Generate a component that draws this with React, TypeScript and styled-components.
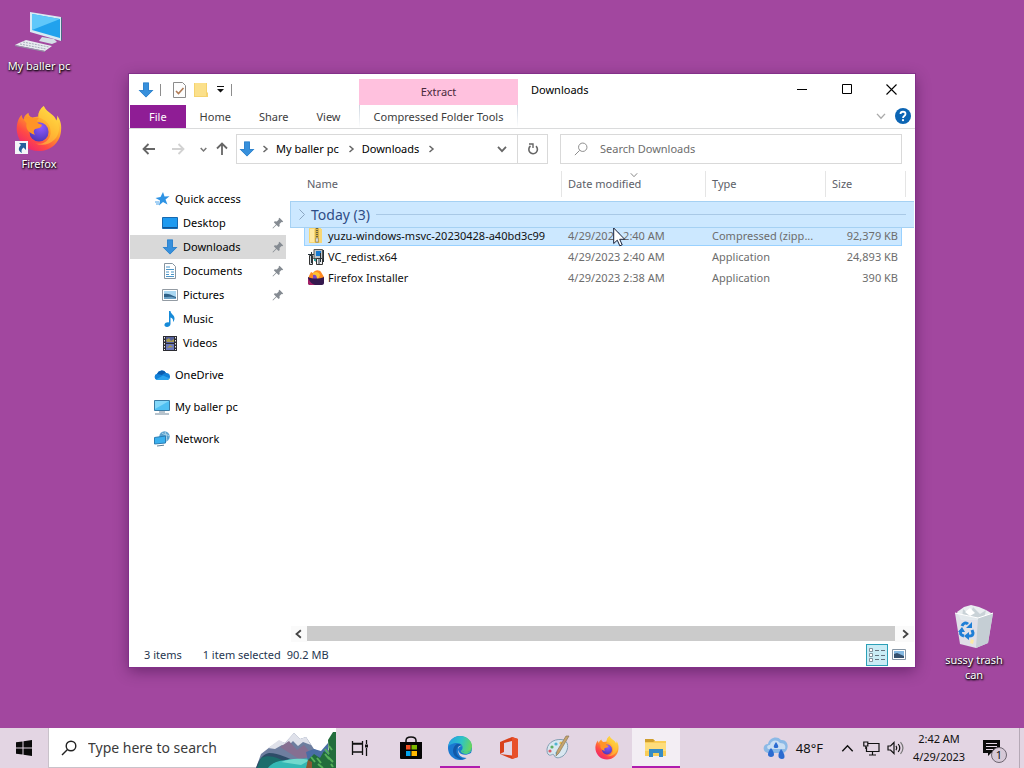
import React from "react";
import styled, { createGlobalStyle } from "styled-components";

const Global = createGlobalStyle`
  *, *::before, *::after { box-sizing: border-box; }
  body { margin: 0; }
  body, button, input, table {
    font-family: "Noto Sans", "Open Sans", sans-serif;
    font-size: 11px;
    line-height: 16px;
  }
  button { border: 0; padding: 0; background: none; color: inherit; cursor: default; }
  a { color: inherit; text-decoration: none; cursor: default; }
  svg { display: block; flex: none; }
`;

/* ---------- desktop ---------- */

const Screen = styled.div`
  display: flex;
  flex-direction: column;
  min-height: 100vh;
  background: #a2479f;
  overflow: hidden;
`;

const Desktop = styled.main`
  position: relative;
  flex: 1;
  display: flex;
  padding: 74px 109px 61px 129px;
`;

const Shortcut = styled.a<{ $x?: number; $right?: number; $top?: number; $bottom?: number }>`
  position: absolute;
  left: ${(p) => (p.$x !== undefined ? `${p.$x}px` : "auto")};
  right: ${(p) => (p.$right !== undefined ? `${p.$right}px` : "auto")};
  top: ${(p) => (p.$top !== undefined ? `${p.$top}px` : "auto")};
  bottom: ${(p) => (p.$bottom !== undefined ? `${p.$bottom}px` : "auto")};
  width: 78px;
  display: flex;
  flex-direction: column;
  align-items: center;
  gap: 2px;
  padding: 0 8px;
  color: #fff;
  line-height: 15px;
  text-align: center;
  text-shadow: 1px 1px 2px #000, 0 1px 2px #000;
`;

const ShortcutName = styled.span<{ $wrap?: boolean }>`
  white-space: ${(p) => (p.$wrap ? "normal" : "nowrap")};
`;

const Window = styled.section`
  flex: 1;
  min-width: 0;
  display: flex;
  flex-direction: column;
  background: #fff;
  color: #000;
  box-shadow: 0 0 0 1px #83308a, 0 4px 14px rgba(40, 0, 50, 0.45);
`;

/* ---------- title bar and ribbon ---------- */

const Ribbon = styled.header`
  display: flex;
  height: 55px;
  border-bottom: 1px solid #dadbdc;
`;

const RibbonLeft = styled.div`
  width: 230px;
  display: flex;
  flex-direction: column;
`;

const QuickBar = styled.div`
  height: 31px;
  display: flex;
  align-items: center;
  padding-left: 9px;
`;

const QuickButton = styled.button<{ $narrow?: boolean }>`
  width: ${(p) => (p.$narrow ? 10 : 16)}px;
  height: 22px;
  margin-right: 6px;
  display: grid;
  place-items: center;
`;

const Divider = styled.span`
  width: 1px;
  height: 12px;
  margin-right: 10px;
  background: #8d8d8d;
`;

const TabList = styled.nav`
  flex: 1;
  display: flex;
  padding-left: 1px;
`;

const Tab = styled.button<{ $file?: boolean }>`
  height: 23px;
  padding: ${(p) => (p.$file ? "0 19px" : "0 14px")};
  color: ${(p) => (p.$file ? "#fff" : "#3c3c3c")};
  background: ${(p) => (p.$file ? "#8f1d95" : "transparent")};
  white-space: nowrap;
`;

const ContextTabs = styled.div`
  width: 159px;
  padding-top: 5px;
  display: flex;
  flex-direction: column;
`;

const ContextTitle = styled.div`
  height: 26px;
  display: grid;
  place-items: center;
  background: #ffc1de;
  color: #4a2a3c;
`;

const ContextTab = styled(Tab)`
  padding: 0;
  border: solid transparent;
  border-width: 0 1px;
  background:
    linear-gradient(#ccd5df, #fff) left / 1px 100% no-repeat,
    linear-gradient(#ccd5df, #fff) right / 1px 100% no-repeat;
  background-origin: border-box;
`;

const WindowTitle = styled.h1`
  flex: 1;
  margin: 0;
  padding: 8px 0 0 13px;
  font-size: 11px;
  font-weight: 400;
`;

const WindowControls = styled.div`
  display: grid;
  grid-template-columns: repeat(3, 45px);
  grid-template-rows: 30px 24px;
  padding-right: 1px;
`;

const ControlButton = styled.button`
  display: grid;
  place-items: center;
`;

const HelpRow = styled.div`
  grid-column: 1 / -1;
  display: flex;
  justify-content: flex-end;
  align-items: center;
  gap: 9px;
  padding-right: 3px;
`;

/* ---------- address bar ---------- */

const AddressRow = styled.div`
  display: grid;
  grid-template-columns: 96px minmax(0, 312fr) minmax(0, 354fr);
  align-items: center;
  padding: 5px 13px 7px 11px;
`;

const NavButtons = styled.div`
  display: flex;
  align-items: center;
`;

const NavButton = styled.button<{ $w: number }>`
  width: ${(p) => p.$w}px;
  height: 24px;
  display: grid;
  place-items: center;
`;

const AddressBox = styled.div`
  height: 30px;
  display: flex;
  align-items: center;
  border: 1px solid #d9d9d9;
  padding-left: 2px;
  white-space: nowrap;
`;

const Crumb = styled.a`
  padding: 0 8px;
`;

const CrumbArrow = styled.span`
  width: 7px;
  display: grid;
  place-items: center;
  svg + & { margin-left: 6px; }
`;

const AddressEnd = styled.div`
  margin-left: auto;
  height: 100%;
  display: grid;
  align-items: center;
  grid-template-columns: 30px 30px;
`;

const Refresh = styled.button`
  height: 100%;
  display: grid;
  place-items: center;
  border-left: 1px solid #d9d9d9;
`;

const FileSearch = styled.label`
  height: 30px;
  margin-left: 12px;
  display: flex;
  align-items: center;
  gap: 12px;
  padding-left: 13px;
  border: 1px solid #d9d9d9;
`;

const SearchInput = styled.input<{ $large?: boolean }>`
  flex: 1;
  min-width: 0;
  border: 0;
  padding: 0;
  outline: 0;
  background: none;
  font-size: ${(p) => (p.$large ? 14 : 11)}px;
  line-height: 20px;
  &::placeholder { color: ${(p) => (p.$large ? "#3b3b3b" : "#6d6d6d")}; opacity: 1; }
`;

/* ---------- body ---------- */

const Body = styled.div`
  flex: 1;
  display: flex;
`;

const Sidebar = styled.nav`
  width: 161px;
  padding: 16px 4px 0 1px;
`;

const SideItem = styled.a<{ $child?: boolean; $active?: boolean; $spaced?: boolean }>`
  height: 24px;
  margin-top: ${(p) => (p.$spaced ? 8 : 0)}px;
  padding-left: ${(p) => (p.$child ? 32 : 24)}px;
  padding-right: 2px;
  display: flex;
  align-items: center;
  gap: 5px;
  background: ${(p) => (p.$active ? "#d9d9d9" : "transparent")};
`;

const SideLabel = styled.span`
  flex: 1;
  white-space: nowrap;
`;

const Content = styled.div`
  flex: 1;
  min-width: 0;
  display: flex;
  flex-direction: column;
  padding-right: 1px;
`;

const FileTable = styled.table`
  display: block;
  flex: 1;
  thead, tbody { display: block; }
`;

const HeadRow = styled.tr`
  display: grid;
  grid-template-columns: 1fr 144px 120px 80px;
  height: 26px;
  margin: 0 8px 4px 14px;
`;

const HeadCell = styled.th`
  position: relative;
  display: flex;
  align-items: center;
  padding: 0 0 0 6px;
  border-right: 1px solid #e5e5e5;
  font-weight: 400;
  color: #5c6068;
  &:first-child { padding-left: 3px; }
`;

const SortMark = styled.span`
  position: absolute;
  top: 0;
  left: 50%;
  margin-left: -4px;
`;

const GroupRow = styled.tr`
  position: relative;
  z-index: 1;
  display: block;
  margin-bottom: -3px;
`;

const GroupCell = styled.th`
  display: flex;
  align-items: center;
  gap: 6px;
  height: 27px;
  padding: 0 8px;
  border: 1px solid #a5d1f3;
  border-right: 0;
  background: #cce8ff;
  color: #2f4d86;
  font-size: 14px;
  line-height: 20px;
  font-weight: 400;
  &::after {
    content: "";
    flex: 1;
    height: 1px;
    background: #a9c9e6;
  }
`;

const FileRow = styled.tr<{ $selected?: boolean }>`
  display: grid;
  grid-template-columns: 1fr 144px 120px 76px;
  height: 21px;
  margin: 0 12px 0 14px;
  background: ${(p) => (p.$selected ? "#cce8ff" : "transparent")};
  box-shadow: ${(p) => (p.$selected ? "inset 0 0 0 1px #99d1ff" : "none")};
`;

const Cell = styled.td<{ $name?: boolean; $right?: boolean }>`
  display: flex;
  align-items: center;
  justify-content: ${(p) => (p.$right ? "flex-end" : "flex-start")};
  gap: 4px;
  padding: ${(p) => (p.$name ? "0 0 0 4px" : p.$right ? "0 4px 0 0" : "0 0 0 6px")};
  color: ${(p) => (p.$name ? "#111" : "#6d6d6d")};
  white-space: nowrap;
`;

const ScrollBar = styled.div`
  height: 16px;
  display: grid;
  grid-template-columns: 16px 1fr 19px;
  padding-left: 1px;
`;

const ScrollButton = styled.button`
  display: grid;
  place-items: center;
  background: #fafafa;
`;

const Thumb = styled.div`
  background: #cbcbcb;
  height: 15px;
`;

const StatusBar = styled.footer`
  height: 25px;
  display: flex;
  align-items: center;
  padding: 0 5px 0 15px;
  color: #26364f;
  white-space: pre;
`;

const StatusText = styled.span<{ $gap: number }>`
  margin-right: ${(p) => p.$gap}px;
`;

const ViewToggle = styled.button<{ $on?: boolean }>`
  width: 22px;
  height: 22px;
  display: grid;
  place-items: center;
  border: 1px solid ${(p) => (p.$on ? "#2ba0b8" : "transparent")};
  background: ${(p) => (p.$on ? "#c9ecf5" : "transparent")};
  &:first-of-type { margin-left: auto; }
`;

const Pointer = styled.span`
  position: absolute;
  left: 613px;
  top: 227px;
  z-index: 2;
`;

/* ---------- taskbar ---------- */

const TaskBar = styled.footer`
  height: 40px;
  display: flex;
  background: #e3d5e3;
  color: #111;
`;

const TaskButton = styled.button<{ $state?: "running" | "active" }>`
  position: relative;
  width: 48px;
  height: 40px;
  display: grid;
  place-items: center;
  background: ${(p) => (p.$state === "active" ? "#f3eef4" : "transparent")};
  &::after {
    content: "";
    position: absolute;
    bottom: 0;
    left: ${(p) => (p.$state === "active" ? 0 : 4)}px;
    right: ${(p) => (p.$state === "active" ? 0 : 4)}px;
    height: ${(p) => (p.$state ? 2 : 0)}px;
    background: #b01cae;
  }
`;

const TaskSearch = styled.label`
  width: 288px;
  display: flex;
  align-items: center;
  gap: 11px;
  padding-left: 12px;
  background: #fff;
  border-bottom: 1px solid #c9c2ca;
  border-left: 1px solid #c9c2ca;
`;

const Scenery = styled.span`
  align-self: flex-end;
  margin-bottom: -1px;
`;

const Apps = styled.div`
  display: flex;
  gap: 1px;
  margin-left: 3px;
`;

const Tray = styled.div`
  margin-left: auto;
  display: flex;
  align-items: center;
`;

const Weather = styled.button`
  display: flex;
  align-items: center;
  gap: 7px;
  margin-right: 12px;
  font-size: 13px;
  line-height: 18px;
`;

const TrayButton = styled.button`
  width: 24px;
  height: 40px;
  display: grid;
  place-items: center;
`;

const Clock = styled.time`
  width: 64px;
  text-align: center;
  line-height: 18px;
`;

const Notice = styled.button`
  position: relative;
  width: 48px;
  height: 40px;
  padding-right: 8px;
  display: grid;
  place-items: center;
`;

const Badge = styled.span`
  position: absolute;
  left: 20px;
  top: 19px;
  width: 16px;
  height: 16px;
  border: 1px solid #6d6570;
  border-radius: 50%;
  background: #d6c9d7;
  line-height: 14px;
  text-align: center;
`;

const ShowDesktop = styled.button`
  width: 5px;
  height: 40px;
  border-left: 1px solid #b5a9b6;
`;

/* ---------- drawings ---------- */

const DownArrow = ({ s = 16 }: { s?: number }) => (
  <svg width={s} height={s} viewBox="0 0 16 16">
    <path d="M5 .5h6V8h4.500L8 15.500.5 8H5z" fill="#3790dc" />
    <path d="M5.500 1h5v7.500h4L8 15 1.500 8.500h4z" fill="none" stroke="#2b7cc4" strokeWidth=".6" />
  </svg>
);

const Chevron = ({ dir, size = 8, color = "#666", w = 1.5 }: { dir: "r" | "l" | "d" | "u"; size?: number; color?: string; w?: number }) => {
  const d = { r: "M2.500 1 6 4 2.500 7", l: "M5.500 1 2 4l3.500 3", d: "M.8 2.300 4 5.700l3.200-3.400", u: "M.8 5.700 4 2.300l3.200 3.400" }[dir];
  return (
    <svg width={size} height={size} viewBox="0 0 8 8">
      <path d={d} fill="none" stroke={color} strokeWidth={(w * 8) / size} />
    </svg>
  );
};

const Arrow = ({ turn, color }: { turn: number; color: string }) => (
  <svg width="14" height="14" viewBox="0 0 14 14">
    <path d="M13 7H1.500M6.500 2 1.500 7l5 5" fill="none" stroke={color} strokeWidth="1.800" transform={`rotate(${turn} 7 7)`} />
  </svg>
);

const Magnifier = ({ s, color, w }: { s: number; color: string; w: number }) => (
  <svg width={s} height={s} viewBox="0 0 16 16">
    <circle cx="10" cy="6" r="4.800" fill="none" stroke={color} strokeWidth={w} />
    <path d="M6.500 9.500 1 15" stroke={color} strokeWidth={w} />
  </svg>
);

const Firefox = ({ s }: { s: number }) => (
  <svg width={s} height={s} viewBox="0 0 48 48">
    <defs>
      <linearGradient id="fxBody" x1=".8" y1=".1" x2=".2" y2=".95">
        <stop offset="0" stopColor="#ffe14a" />
        <stop offset=".4" stopColor="#ff9a2a" />
        <stop offset=".72" stopColor="#ff4a45" />
        <stop offset="1" stopColor="#ee2470" />
      </linearGradient>
      <radialGradient id="fxCore" cx=".6" cy=".25" r=".8">
        <stop offset="0" stopColor="#9059ff" />
        <stop offset="1" stopColor="#4b36b5" />
      </radialGradient>
    </defs>
    <path d="M29 0c-4 3-6 7-6 11l-6 1c-3-1-4-3-4-5-3 2-5 4-5 7-2-2-2-4-2-5C2 13 0 20 1 27c2 12 11 20 23 20s22-9 23-21c1-8-2-13-4-16 0 2 0 4-1 5C40 8 32 7 29 0z" fill="url(#fxBody)" />
    <path d="M29 0c-4 3-6 7-5 12 7 2 13 8 12 17-1 8-9 12-16 10 12 5 25-3 25-16C45 12 32 9 29 0z" fill="#ffd23c" opacity=".55" />
    <circle cx="24" cy="27" r="10" fill="url(#fxCore)" />
    <path d="M8 14c3-3 7-3 10-1 2-1 4-1 6 0-2 1-3 3-1 5 1 1 4 1 4 2-1 3-4 3-7 4-2 1-2 4 0 6-8-2-10-7-9-12z" fill="#ff9427" />
  </svg>
);

const DesktopPc = () => (
  <svg width="48" height="44" viewBox="-4 0 48 44">
    <path d="M11 0 42 5v24L11 20z" fill="#d8eaf3" />
    <path d="m13 2 28 5v19L13 18z" fill="#21a2ed" />
    <path d="m13 2 28 5-28 11z" fill="#60c8fa" />
    <path d="m42 5 1 1v22l-1 1z" fill="#4c6a83" />
    <path d="m23 25 12 2 3 3-5 2-13-3z" fill="#d5dfe6" />
    <path d="M0 31 7 28l26 6-7 5-30-6z" fill="#e9ebf0" />
    <path d="m-4 33 30 6v1l-30-6z" fill="#929aa6" />
    <path d="m1 32 26 5M4 30l26 5" stroke="#a5adb9" strokeDasharray="2 1" />
  </svg>
);

const FirefoxShortcut = () => (
  <svg width="48" height="48" viewBox="0 0 48 48">
    <svg x="1" width="46" height="46"><Firefox s={46} /></svg>
    <path d="M0 35h13v13H0z" fill="#f4f5f8" />
    <path d="M4 37h7v7l-2.500-2.500C6.500 43 6 45 7 47c-4-2-4-5-1-8z" fill="#255f9c" />
  </svg>
);

const Trash = () => (
  <svg width="42" height="46" viewBox="0 0 42 46">
    <path d="m4 8 7-5 7-2 8 2 7 3 5 3-4 7H8z" fill="#e9edf0" />
    <path d="m10 5 7 6 3-8 7 7 6-4-2 9H9z" fill="#c9d2d7" />
    <path d="m12 8 5-4 5 5-5 3z" fill="#fff" />
    <path d="m2 9 23 5 15-5-5 30-12 5-16-4z" fill="#e3e9ed" opacity=".94" />
    <path d="m25 14 15-5-5 30-12 5z" fill="#c5ced4" />
    <path d="m2 9 23 5 15-5" fill="none" stroke="#fff" />
    <g fill="none" stroke="#1f7ed6" strokeWidth="3">
      <path d="M9 22c1-3 4-4 6-2" />
      <path d="m19 26 1 3c0 3-2 3-4 3" />
      <path d="M11 32c-4-1-4-3-3-5" />
    </g>
    <path d="m13 24 6 0 0-6zM16 28v8l-5-4zM5 28l4-5 3 5z" fill="#1f7ed6" />
    <path d="m18 35 3 1-1 4-3-1z" fill="#fbe9a5" />
  </svg>
);

const CheckDoc = () => (
  <svg width="13" height="16" viewBox="0 0 13 16">
    <path d="M.5.5h9l3 3v12H.5z" fill="#fdfdfd" stroke="#8b8b8b" />
    <path d="m3 9 2.500 2.500L10.500 6" fill="none" stroke="#b07b55" strokeWidth="1.600" />
  </svg>
);

const Folder = () => (
  <svg width="14" height="16" viewBox="0 0 14 16">
    <path d="M0 1h13v9l1 1v4H0z" fill="#f5d36f" />
    <path d="M1 1h11v13H1z" fill="#fbe08b" />
  </svg>
);

const Star = () => (
  <svg width="16" height="16" viewBox="0 0 16 16">
    <path d="m9 1 1.500 4.500 5-.2-4 3.200 2 5-4.500-2.600L5 14.500l1-5L1.500 7l5-1z" fill="#2e93e4" />
    <path d="M1 11h4M2 13h3" stroke="#4ba3ea" />
  </svg>
);

const Monitor = () => (
  <svg width="16" height="16" viewBox="0 0 16 16">
    <path d="M.5 2.500h15v11H.5z" fill="#1e9af0" stroke="#1769b0" />
    <path d="M1 12h14v1H1z" fill="#125393" />
  </svg>
);

const Doc = () => (
  <svg width="16" height="16" viewBox="0 0 16 16">
    <path d="M2.500.5h8l3 3v12h-11z" fill="#fff" stroke="#8795a1" />
    <path d="M4 4h4M4 6.500h8M4 9h3m2 0h3M4 11.500h3m2 0h3M4 13.500h8" stroke="#4b96c9" />
  </svg>
);

const Picture = () => (
  <svg width="16" height="16" viewBox="0 0 16 16">
    <path d="M.5 2.500h15v11H.5z" fill="#fff" stroke="#939ba3" />
    <path d="M2 4h12v8H2z" fill="#a9d7f2" />
    <path d="M2 7c3-1 6 0 12 3v2H2z" fill="#2e6188" />
    <path d="M2 10c4 0 7-1 12 1v1H2z" fill="#6aa0c4" />
  </svg>
);

const Note = () => (
  <svg width="16" height="16" viewBox="0 0 16 16">
    <path d="M7 0h1.500c0 3 4.500 4 4 8-.3 1.500-1 2.500-1.500 3 .5-3-1-4-2.500-4.500V13c0 2-2 3-3.500 3S2 15 2.500 13.500 5 11 7 11.500z" fill="#168ad8" />
  </svg>
);

const Film = () => (
  <svg width="16" height="16" viewBox="0 0 16 16">
    <path d="M1 1h14v15H1z" fill="#2c2c32" />
    <path d="M2.500 2v13M13.500 2v13" stroke="#eee" strokeDasharray="1.500 1.500" />
    <path d="M4 2h8v6H4z" fill="#55609b" />
    <path d="M4 9h8v6H4z" fill="#6c79bc" />
    <path d="m4 5 3-2 2 3 3-2v3H5zM5 13l3-3 3 2" fill="#a69a4f" />
  </svg>
);

const Cloud = () => (
  <svg width="16" height="16" viewBox="0 0 16 16">
    <path d="M3 13a3.200 3.200 0 0 1 0-6.200A5 5 0 0 1 12 6a3.600 3.600 0 0 1 1.500 7z" fill="#1381d8" />
    <path d="M3 7a5 5 0 0 1 9-1c-2 0-3 1-4 2z" fill="#0b5cae" />
    <path d="M2 12.500 9 8.500l6.500 2.800c-.5 1.200-1.200 1.700-2.500 1.700H3z" fill="#2ca4ee" />
  </svg>
);

const SmallPc = () => (
  <svg width="16" height="16" viewBox="0 0 16 16">
    <path d="M.5 1.500h15v10H.5z" fill="#4fc0f3" stroke="#3a7ca5" />
    <path d="M1 2h14L1 10z" fill="#83d8fa" />
    <path d="M5 13h6M1 15h14" stroke="#70889b" />
  </svg>
);

const NetworkIcon = () => (
  <svg width="16" height="16" viewBox="0 0 16 16">
    <circle cx="10.500" cy="5.500" r="5.200" fill="#5ba1ce" />
    <path d="M8 2c2 2 5 1 7 3M11 1c2 3 1 6 2 9" stroke="#b1d7ea" fill="none" />
    <path d="m.5 6.500 11-1.500v7L.5 13z" fill="#3bb0ee" stroke="#2a7db4" />
    <path d="m3 15 7-.8" stroke="#5e7f96" />
  </svg>
);

const Pin = () => (
  <svg width="12" height="12" viewBox="0 0 12 12">
    <path d="m7.500.8 3.700 3.700-1 .8-.7-.2-2 2 .2 2-1 1L4.500 8 1 11.500l-.5-.5L4 7.500 1.800 5.200l1-1 2 .3 2-2-.2-.8z" fill="#858b92" />
  </svg>
);

const Zip = () => (
  <svg width="16" height="16" viewBox="0 0 16 16">
    <path d="M1 0h12v1h1v14H1z" fill="#f8d775" />
    <path d="M2 1h4v13H2z" fill="#ffe9a3" />
    <path d="M7 0h4v15H7z" fill="#d9b44a" />
    <path d="M9 0v9" stroke="#6c6241" strokeWidth="2" strokeDasharray="1 1" />
    <path d="M8 10h2v4H8z" fill="#fff" stroke="#777" strokeWidth=".6" />
  </svg>
);

const Setup = () => (
  <svg width="16" height="16" viewBox="0 0 16 16">
    <path d="M6 .5h8.500v9H6z" fill="#bfc6cc" stroke="#555" />
    <path d="M8 2h5v5H8z" fill="#1479d2" />
    <path d="M1.500 6.500h3v9h-3z" fill="#d5d9df" stroke="#333" />
    <path d="M8.500 9.500h6v6h-6z" fill="#eceef1" stroke="#333" />
    <path d="M0 5.500h6M3.500 3v11M5.500 9l3 4M11 10v5M12.500 4v9M15.500 1v12" stroke="#26323a" />
    <path d="M6 10h2v2H6z" fill="#2ca3a0" />
  </svg>
);

const FoxInstaller = () => (
  <svg width="16" height="16" viewBox="0 0 16 16">
    <path d="M1 6 3 2l2 1c2-4 7-3 8-1l3 5v3H0z" fill="#ff8a22" />
    <path d="M5 3c3-2 6-1 7 2l-2 4H5z" fill="#ffc332" />
    <path d="M5 5c2-1 4 0 4 4H5z" fill="#7746c9" />
    <path d="M0 7c5 2 11 2 16 0v6c0 1-1 2-2 2H2c-1 0-2-1-2-2z" fill="#35194e" />
    <path d="M0 8c2 4 4 6 7 7H2c-1 0-2-1-2-2z" fill="#a51f67" />
  </svg>
);

const MountainScene = () => (
  <svg width="80" height="36" viewBox="0 0 80 36">
    <path d="M0 36 5 22l9-7 9-6 6 2 9-10 6 6 6-2 8 12 8 4 14-6v21z" fill="#6e7e9f" />
    <path d="m12 16 11-8 6 3 9-10 6 6 6-2 5 8-8-3-5 4-5-5-6 6-5-2-7 4z" fill="#dfe1ea" />
    <path d="m24 15 9-6 8 9 7-5 9 11-14 3z" fill="#866f91" />
    <path d="M0 36c3-9 7-14 13-15 11 0 18 6 29 8l-7 7z" fill="#2e4c68" />
    <path d="M5 26c9-4 17 0 24 4l-7 6H1z" fill="#1c6d6c" />
    <path d="M12 36c7-10 24-8 44-10l12 10z" fill="#34b8b4" />
    <path d="M25 30c11-4 18-4 29-2l-9 5z" fill="#70d9cd" />
    <path d="m50 20 8-3 7 2 7-8v18H52z" fill="#496da5" />
    <path d="m51 36 1-8 6-6 6 4 4-7 5 4-1-15 5-8h3v36z" fill="#226d3c" />
    <path d="m55 25 4 5m2-4 4 5m4-14 4 5m-4 0 4 5m-11 5 5 4m6-22 3 4m-4 7 5 5m-2 2 2 3" stroke="#57b25a" strokeWidth="2" />
    <path d="m50 36 2-8 4 2v6z" fill="#8a5932" />
  </svg>
);

const Store = () => (
  <svg width="24" height="24" viewBox="0 0 24 24">
    <path d="M7 7V4.500C7 2.500 9 1 12 1s5 1.500 5 3.500V7" fill="none" stroke="#111" strokeWidth="1.500" />
    <path d="M1 6h22v16a1 1 0 0 1-1 1H2a1 1 0 0 1-1-1z" fill="#050505" />
    <path d="M7 9h4.500v4.500H7z" fill="#f25022" /><path d="M12.500 9H18v4.500h-5.500z" fill="#7fba00" />
    <path d="M7 15h4.500v5H7z" fill="#00a4ef" /><path d="M12.500 15H18v5h-5.500z" fill="#ffb900" />
  </svg>
);

const Edge = () => (
  <svg width="24" height="24" viewBox="0 0 24 24">
    <defs>
      <linearGradient id="edgeTop" x1="0" x2="1" y1=".3" y2=".5">
        <stop offset="0" stopColor="#249fe4" /><stop offset=".55" stopColor="#2fc3c5" /><stop offset="1" stopColor="#68d65c" />
      </linearGradient>
    </defs>
    <circle cx="12" cy="12" r="12" fill="#1a78d0" />
    <path d="M0 11C1 4 6 0 12 0c7 0 12 5 12 10 0 4-3 6-6 6-3 0-5-1-4-2 2-4-1-7-5-7-4 0-8 2-9 4z" fill="url(#edgeTop)" />
    <path d="M9 8c-4 2-6 9-1 13 3 2 6 3 8 2-6-1-9-6-7-11 1-2 3-3 5-2-1-2-3-2-5-2z" fill="#1259a8" />
    <path d="M14 10c-4-1-5 3-3 6 2 3 7 4 12 1l2 2c-1 2-3 3-5 3-4 0-8-1-9-4-2-4-1-8 3-8z" fill="#e3d5e3" />
    <path d="M13 14c-1 2 2 4 6 4 3-1 5-3 5-6-1 3-4 4-7 4-2 0-3-1-4-2z" fill="#4ccf88" />
  </svg>
);

const Office = () => (
  <svg width="24" height="24" viewBox="0 0 24 24">
    <path d="M3 6 15 1l6 2v18l-6 2-12-5 12 1.500V5L7 7v9l-4 2z" fill="#d9401b" />
    <path d="m15 1 6 2v18l-6 2z" fill="#e8502a" />
  </svg>
);

const Palette = () => (
  <svg width="26" height="26" viewBox="0 0 26 26">
    <path d="M2 14C3 7 11 3 19 5c6 3 4 12-1 16-5 3-8 2-9-1-1-2-3 1-5 0-2-1-2-4-2-6z" fill="#d9e7f0" stroke="#829fb3" />
    <circle cx="7" cy="12" r="1.600" fill="#5fae62" /><circle cx="11" cy="9" r="1.600" fill="#4fb5cf" />
    <circle cx="16" cy="8" r="1.600" fill="#e8ba4b" /><circle cx="5" cy="16" r="1.600" fill="#da5b67" />
    <circle cx="12" cy="18" r="1.600" fill="#60b7d9" />
    <path d="M24 1 14 18l-3 3 1-5L21 1z" fill="#c7a46b" stroke="#8a7a5e" strokeWidth=".7" />
  </svg>
);

const Explorer = () => (
  <svg width="24" height="24" viewBox="0 0 24 24">
    <path d="M1 3h8l2 2h11v15H1z" fill="#f9cd58" />
    <path d="M1 3h8l2 2-2 1H1z" fill="#cf9e2f" />
    <path d="M1 7h21v8H1z" fill="#fddd7c" />
    <path d="M5 21v-8h14v8h-4v-3H9v3z" fill="#358bc5" />
    <path d="M9 17h6v3h-2l-1-1-1 1H9z" fill="#f7cf5c" />
  </svg>
);

const TaskView = () => (
  <svg width="18" height="18" viewBox="0 0 18 18" fill="none" stroke="#111" strokeWidth="1.300">
    <path d="M1.500 2v2.500h10V2M1.500 5h10v8h-10zM1.500 16v-3h10v3M15.500 1v4M15.500 9v8" />
    <path d="M14 5.500h3v3h-3z" fill="#111" stroke="none" />
  </svg>
);

const Rain = () => (
  <svg width="26" height="24" viewBox="0 0 26 24">
    <path d="M6 17c-7 0-7-9-1-9C6 2 14-1 18 4c8-1 9 11 2 13z" fill="#8bb9e6" />
    <path d="M7 9C8 4 14 3 17 7c5 0 6 3 5 6H5c-2-3 0-4 2-4z" fill="#c9def2" />
    <g fill="#2b6bd0">
      <path d="M13 6c3 4 3 6 0 6s-3-2 0-6zM8 12c4 5 4 9 0 9s-4-4 0-9zM18 13c4 5 5 10 1 10s-5-4-1-10z" />
    </g>
  </svg>
);

const places = [
  { label: "Quick access", icon: <Star /> },
  { label: "Desktop", icon: <Monitor />, child: true, pinned: true },
  { label: "Downloads", icon: <DownArrow />, child: true, pinned: true, active: true },
  { label: "Documents", icon: <Doc />, child: true, pinned: true },
  { label: "Pictures", icon: <Picture />, child: true, pinned: true },
  { label: "Music", icon: <Note />, child: true },
  { label: "Videos", icon: <Film />, child: true },
  { label: "OneDrive", icon: <Cloud />, spaced: true },
  { label: "My baller pc", icon: <SmallPc />, spaced: true },
  { label: "Network", icon: <NetworkIcon />, spaced: true },
];

const files = [
  { name: "yuzu-windows-msvc-20230428-a40bd3c99", icon: <Zip />, date: "4/29/2023 2:40 AM", type: "Compressed (zipp...", size: "92,379 KB", selected: true },
  { name: "VC_redist.x64", icon: <Setup />, date: "4/29/2023 2:40 AM", type: "Application", size: "24,893 KB" },
  { name: "Firefox Installer", icon: <FoxInstaller />, date: "4/29/2023 2:38 AM", type: "Application", size: "390 KB" },
];

export default function App() {
  return (
    <Screen>
      <Global />
      <Desktop>
        <Shortcut href="#pc" $x={0} $top={12}><DesktopPc /><ShortcutName>My baller pc</ShortcutName></Shortcut>
        <Shortcut href="#firefox" $x={0} $top={106}><FirefoxShortcut /><ShortcutName>Firefox</ShortcutName></Shortcut>
        <Shortcut href="#trash" $right={11} $bottom={46}><Trash /><ShortcutName $wrap>sussy trash can</ShortcutName></Shortcut>

        <Window aria-label="Downloads">
          <Ribbon>
            <RibbonLeft>
              <QuickBar>
                <QuickButton aria-label="Downloads menu"><DownArrow s={16} /></QuickButton>
                <Divider />
                <QuickButton aria-label="Properties"><CheckDoc /></QuickButton>
                <QuickButton aria-label="New folder"><Folder /></QuickButton>
                <QuickButton aria-label="Customize" $narrow>
                  <svg width="7" height="7" viewBox="0 0 7 7"><path d="M0 0h7v1H0zM0 3h7L3.500 6.500z" fill="#111" /></svg>
                </QuickButton>
                <Divider />
              </QuickBar>
              <TabList>
                <Tab $file>File</Tab>
                <Tab>Home</Tab>
                <Tab>Share</Tab>
                <Tab>View</Tab>
              </TabList>
            </RibbonLeft>
            <ContextTabs>
              <ContextTitle>Extract</ContextTitle>
              <ContextTab>Compressed Folder Tools</ContextTab>
            </ContextTabs>
            <WindowTitle>Downloads</WindowTitle>
            <WindowControls>
              <ControlButton aria-label="Minimize">
                <svg width="10" height="10"><path d="M0 5h10v1H0z" /></svg>
              </ControlButton>
              <ControlButton aria-label="Maximize">
                <svg width="10" height="10"><path d="M.5.5h9v9h-9z" fill="none" stroke="#000" /></svg>
              </ControlButton>
              <ControlButton aria-label="Close">
                <svg width="11" height="11"><path d="m.5.5 10 10m0-10-10 10" stroke="#000" strokeWidth="1.100" /></svg>
              </ControlButton>
              <HelpRow>
                <button aria-label="Expand ribbon"><Chevron dir="d" size={10} color="#aaa" w={1.4} /></button>
                <button aria-label="Help">
                  <svg width="16" height="16" viewBox="0 0 16 16">
                    <circle cx="8" cy="8" r="8" fill="#0c65b4" />
                    <path d="M5.500 6C5.500 3 10.500 3 10.500 6c0 2-2.500 2-2.500 4" fill="none" stroke="#fff" strokeWidth="1.800" />
                    <circle cx="8" cy="12.200" r="1.100" fill="#fff" />
                  </svg>
                </button>
              </HelpRow>
            </WindowControls>
          </Ribbon>

          <AddressRow>
            <NavButtons>
              <NavButton $w={18} aria-label="Back"><Arrow turn={0} color="#666" /></NavButton>
              <NavButton $w={40} aria-label="Forward"><Arrow turn={180} color="#d2d2d2" /></NavButton>
              <NavButton $w={10} aria-label="Recent locations"><Chevron dir="d" size={7} color="#777" /></NavButton>
              <NavButton $w={28} aria-label="Up"><Arrow turn={90} color="#666" /></NavButton>
            </NavButtons>
            <AddressBox>
              <DownArrow />
              <CrumbArrow><Chevron dir="r" /></CrumbArrow>
              <Crumb href="#pc">My baller pc</Crumb>
              <CrumbArrow><Chevron dir="r" /></CrumbArrow>
              <Crumb href="#downloads">Downloads</Crumb>
              <CrumbArrow><Chevron dir="r" /></CrumbArrow>
              <AddressEnd>
                <NavButton $w={30} aria-label="Previous locations"><Chevron dir="d" size={10} color="#666" w={1.800} /></NavButton>
                <Refresh aria-label="Refresh">
                  <svg width="12" height="12" viewBox="0 0 12 12">
                    <path d="M3.500 3A4.300 4.300 0 1 0 9 3.200" fill="none" stroke="#666" strokeWidth="1.600" />
                    <path d="M2 1h4v4" fill="none" stroke="#666" strokeWidth="1.400" />
                  </svg>
                </Refresh>
              </AddressEnd>
            </AddressBox>
            <FileSearch>
              <Magnifier s={14} color="#888" w={1.1} />
              <SearchInput aria-label="Search Downloads" placeholder="Search Downloads" />
            </FileSearch>
          </AddressRow>

          <Body>
            <Sidebar>
              {places.map((p) => (
                <SideItem key={p.label} href="#" $child={p.child} $active={p.active} $spaced={p.spaced}>
                  {p.icon}
                  <SideLabel>{p.label}</SideLabel>
                  {p.pinned && <Pin />}
                </SideItem>
              ))}
            </Sidebar>
            <Content>
              <FileTable>
                <thead>
                  <HeadRow>
                    <HeadCell>Name</HeadCell>
                    <HeadCell>
                      Date modified
                      <SortMark><Chevron dir="d" size={8} color="#888" w={1} /></SortMark>
                    </HeadCell>
                    <HeadCell>Type</HeadCell>
                    <HeadCell>Size</HeadCell>
                  </HeadRow>
                </thead>
                <tbody>
                  <GroupRow>
                    <GroupCell colSpan={4}>
                      <svg width="6" height="11" viewBox="0 0 6 11"><path d="m.5.5 5 5-5 5" fill="none" stroke="#8ba6c2" /></svg>
                      Today (3)
                    </GroupCell>
                  </GroupRow>
                  {files.map((f) => (
                    <FileRow key={f.name} $selected={f.selected}>
                      <Cell $name>{f.icon}{f.name}</Cell>
                      <Cell>{f.date}</Cell>
                      <Cell>{f.type}</Cell>
                      <Cell $right>{f.size}</Cell>
                    </FileRow>
                  ))}
                </tbody>
              </FileTable>
              <ScrollBar>
                <ScrollButton aria-label="Scroll left"><Chevron dir="l" size={10} color="#444" w={1.800} /></ScrollButton>
                <Thumb />
                <ScrollButton aria-label="Scroll right"><Chevron dir="r" size={10} color="#444" w={1.800} /></ScrollButton>
              </ScrollBar>
            </Content>
          </Body>

          <StatusBar>
            <StatusText $gap={21}>3 items</StatusText>
            <StatusText $gap={6}>1 item selected</StatusText>
            <StatusText $gap={0}>90.2 MB</StatusText>
            <ViewToggle $on aria-label="Details view">
              <svg width="16" height="14" viewBox="0 0 16 14">
                <path d="M.5.5h3v3h-3zM.5 5.500h3v3h-3zM.5 10.500h3v3h-3z" fill="#fff" stroke="#6b7885" strokeWidth=".8" />
                <path d="M6 2.500h4M6 7.500h4M6 11.500h4M12 2.500h4M12 7.500h4M12 11.500h4" stroke="#64727f" />
              </svg>
            </ViewToggle>
            <ViewToggle aria-label="Thumbnail view">
              <svg width="14" height="11" viewBox="0 0 14 11">
                <path d="M.5.500h13v10H.5z" fill="#fff" stroke="#8796a5" />
                <path d="M2 2h10v7H2z" fill="#85b9e2" /><path d="m2 5 3-1 7 3v2H2z" fill="#36516f" />
              </svg>
            </ViewToggle>
          </StatusBar>
        </Window>

        <Pointer>
          <svg width="13" height="20" viewBox="0 0 13 20">
            <path d="M.7 1v15.500l3.600-3.300 2.500 5.600 2.400-1-2.500-5.500h5z" fill="#fff" stroke="#16213a" />
          </svg>
        </Pointer>
      </Desktop>

      <TaskBar>
        <TaskButton aria-label="Start">
          <svg width="16" height="16" viewBox="0 0 16 16"><path d="m0 2.300 6.500-.9v6H0zM7.500 1.200 16 0v7.500H7.500zM0 8.500h6.500v6.100L0 13.700zM7.500 8.500H16V16l-8.500-1.200z" fill="#0a0a0a" /></svg>
        </TaskButton>
        <TaskSearch>
          <Magnifier s={16} color="#222" w={1.4} />
          <SearchInput $large aria-label="Type here to search" placeholder="Type here to search" />
          <Scenery><MountainScene /></Scenery>
        </TaskSearch>
        <TaskButton aria-label="Task view"><TaskView /></TaskButton>
        <Apps>
          <TaskButton aria-label="Store"><Store /></TaskButton>
          <TaskButton aria-label="Edge" $state="running"><Edge /></TaskButton>
          <TaskButton aria-label="Office"><Office /></TaskButton>
          <TaskButton aria-label="Paint"><Palette /></TaskButton>
          <TaskButton aria-label="Firefox"><Firefox s={24} /></TaskButton>
          <TaskButton aria-label="File Explorer" $state="active"><Explorer /></TaskButton>
        </Apps>
        <Tray>
          <Weather><Rain />48°F</Weather>
          <TrayButton aria-label="Show hidden icons">
            <Chevron dir="u" size={13} color="#111" w={1.4} />
          </TrayButton>
          <TrayButton aria-label="Network status">
            <svg width="17" height="15" viewBox="0 0 17 15" fill="none" stroke="#111" strokeWidth="1.200">
              <path d="M5 2.500h11v8H3.500V6M9.500 10.500V14M6 14h7M.8 1h4v4h-4zM2.800 5v3" />
            </svg>
          </TrayButton>
          <TrayButton aria-label="Volume">
            <svg width="17" height="14" viewBox="0 0 17 14" fill="none" stroke="#111" strokeWidth="1.200">
              <path d="M1 5h2.500L7 1.500v11L3.500 9H1zM9 4.800c1 1.400 1 3 0 4.400M11.200 3c2 2.500 2 5.500 0 8" />
              <path d="M13.500 1.200c3 3.500 3 8 0 11.600" stroke="#777" />
            </svg>
          </TrayButton>
          <Clock>2:42 AM<br />4/29/2023</Clock>
          <Notice aria-label="1 new notification">
            <svg width="17" height="16" viewBox="0 0 17 16">
              <path d="M0 0h17v13H8l-3 3v-3H0z" fill="#0b0b0b" />
              <path d="M3 3.500h11M3 6.500h11M3 9.500h7" stroke="#e3d5e3" />
            </svg>
            <Badge>1</Badge>
          </Notice>
          <ShowDesktop aria-label="Show desktop" />
        </Tray>
      </TaskBar>
    </Screen>
  );
}
